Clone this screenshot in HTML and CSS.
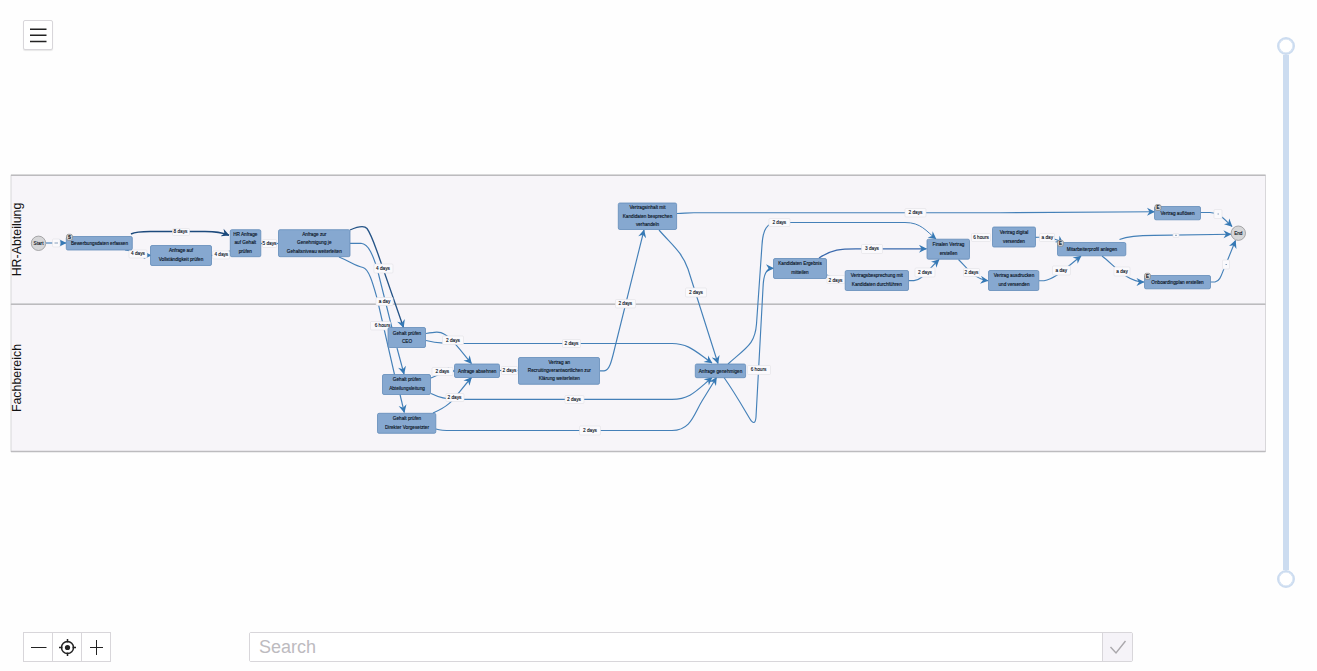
FILE: index.html
```html
<!DOCTYPE html>
<html lang="de">
<head>
    <meta charset="UTF-8">
    <meta name="viewport" content="width=device-width, initial-scale=1.0">
    <title>Prozess</title>
    <link rel="stylesheet" href="styles.css">
</head>
<body>
    <div class="app">
        <div class="main">
            <header class="header">
                <button class="button menu-button" aria-label="Menu">
                    <svg width="28" height="28" viewBox="0 0 28 28">
                        <path class="icon-line" d="M6 8.200h16.500M6 14.300h16.500M6 20.500h16.500"/>
                    </svg>
                </button>
            </header>

            <svg class="diagram" width="1267" height="285" viewBox="0 170 1267 285">
                <defs>
                    <marker id="arrow" viewBox="0 0 8 8" refX="7.5" refY="4" markerWidth="8.5" markerHeight="8.5" markerUnits="userSpaceOnUse" orient="auto">
                        <path d="M0.4 0.2L8 4L0.4 7.8L2.8 4Z" fill="#3679b5"/>
                    </marker>
                    <marker id="arrow-dark" viewBox="0 0 8 8" refX="7.5" refY="4" markerWidth="8.5" markerHeight="8.5" markerUnits="userSpaceOnUse" orient="auto">
                        <path d="M0.4 0.2L8 4L0.4 7.8L2.8 4Z" fill="#1d4a7c"/>
                    </marker>
                </defs>

                <!-- lanes -->
                <rect class="lane" x="11" y="175.3" width="1254.5" height="129"/>
                <rect class="lane" x="11" y="304.3" width="1254.5" height="147.2"/>
                <path class="lane-line" d="M11 175.3H1265.5M11 304.3H1265.5M11 451.5H1265.5"/>
                <text class="lane-title" transform="translate(21 239.5) rotate(-90)">HR-Abteilung</text>
                <text class="lane-title" transform="translate(21 378) rotate(-90)">Fachbereich</text>

                <!-- edges -->
                <g class="edges">
                    <path d="M46 243H66"/>
                    <path class="strong" d="M131 234C137 231 145 231.5 155 231.5H205C216 231.5 221 232 229 235.3"/>
                    <path d="M125 250C136 251 141 255 151 255.5"/>
                    <path class="plain" d="M211 255.5C218 255 224 253 230 251"/>
                    <path class="plain" d="M261 243.5H278"/>
                    <path class="dark" d="M350 230C358 226.500 364 225 367 228.500C371 234 374 243 378 254L403.500 327.500"/>
                    <path class="plain" d="M350 243.300H361C369 244 373 256 377 268L392 328"/>
                    <path d="M397 348L404 374"/>
                    <path class="plain" d="M339 257C349 261 355 266 363 267.500C369 269 373 284 377 298L394.500 374.500"/>
                    <path d="M400 394.500L404.300 412.500"/>
                    <path d="M426 333.500C434 332 440 331 444 334C452 338 460 350 471.500 363.500"/>
                    <path d="M426 340.500C438 343.500 448 343.500 465 343.500H672C689 343.500 696 352 712 363"/>
                    <path d="M431 378C439 374 447 371 455 371"/>
                    <path d="M431 393.500C440 398 446 399.300 456 399.300H672C690 399.300 696 391 712 377.500"/>
                    <path d="M433 413C454 404 454 397 471.500 377.500"/>
                    <path d="M436 429C443 431 450 430.500 456 430.500H672C691 430.500 694 414 702 401L716.500 377.500"/>
                    <path class="plain" d="M500 370.500H518"/>
                    <path d="M600 370.800H604C610 371 612 359 616 343L644 230"/>
                    <path d="M677 213.500C684 213.500 686 212.700 694 212.700H1000L1154.500 211.700"/>
                    <path d="M659 230C672 245 682 252 688 269L718 363.500"/>
                    <path class="plain" d="M728 364C747 347 755 344 756.500 324L762 245C763 229 767 222.500 778 222.500"/>
                    <path class="thin-edge" d="M778 222.500H905C921 222.500 926 231 936 239"/>
                    <path d="M724 377.500C735 393 744 409 750 419C753 424 755.500 424 756 417L763 288C763.500 274 766 268.300 773.500 268.300"/>
                    <path class="strong-blue" d="M819 258C832 249.500 841 248.800 856 248.800H926.500"/>
                    <path class="plain" d="M827 275C833 278 838 280 845 280"/>
                    <path d="M908.500 280.600H914C922 280 927 271 939 259.500"/>
                    <path d="M958.500 259.500C967 268 974 279 988 280.700"/>
                    <path d="M1035 237.300C1046 237.300 1054 236.500 1063 243.500"/>
                    <path d="M1039 280.700H1044C1055 279 1066 268 1081 256"/>
                    <path d="M1119.500 239.500C1130 235.500 1143 235.400 1154 235.400L1231 234.200"/>
                    <path d="M1102 256C1115 266 1127 282 1144 282"/>
                    <path d="M1200.500 212.500H1210C1219 212.500 1223 218 1232 226.500"/>
                    <path d="M1210.500 282H1215C1221 281 1222 272 1226 264L1235.500 240.500"/>
                </g>

                <!-- edge labels -->
                <g class="edge-label">
                    <rect x="52.500" y="239" width="7.500" height="8"/><path class="dash" d="M54.500 243h3.500"/>
                    <rect x="172.500" y="228.500" width="17" height="7"/><text x="180.500" y="233.300">8 days</text>
                    <rect x="129" y="250" width="18" height="8"/><text x="138" y="255.300">4 days</text>
                    <rect x="212.500" y="251" width="17" height="8"/><text x="221.300" y="256">4 days</text>
                    <rect x="262.500" y="239.500" width="14" height="8"/><text x="269.500" y="245">5 days</text>
                    <rect x="374" y="264" width="19" height="9"/><text x="383" y="270.300">4 days</text>
                    <rect x="376" y="297.500" width="17" height="8"/><text x="384.500" y="303">a day</text>
                    <rect x="370.500" y="321.500" width="20" height="8.500"/><text x="382.500" y="327.300">6 hours</text>
                    <rect x="442.500" y="336" width="21" height="8.500"/><text x="453" y="342.300">2 days</text>
                    <rect x="562.500" y="339.500" width="18" height="8"/><text x="571.500" y="345">2 days</text>
                    <rect x="432" y="367.500" width="21" height="8"/><text x="442.300" y="373">2 days</text>
                    <rect x="446" y="393.500" width="18" height="8"/><text x="454.500" y="399">2 days</text>
                    <rect x="501.500" y="366.500" width="16" height="8"/><text x="509.500" y="372.300">2 days</text>
                    <rect x="565" y="395.500" width="19" height="8"/><text x="574" y="401">2 days</text>
                    <rect x="579.500" y="426" width="21" height="9"/><text x="590" y="432.300">2 days</text>
                    <rect x="615.500" y="299.500" width="20" height="8.500"/><text x="625.300" y="305.300">2 days</text>
                    <rect x="685.500" y="288" width="21" height="9"/><text x="696" y="294.300">2 days</text>
                    <rect x="747.500" y="365.500" width="23" height="9"/><text x="758.500" y="371.300">6 hours</text>
                    <rect x="905" y="208.500" width="21" height="8.500"/><text x="915.500" y="214">2 days</text>
                    <rect x="769" y="218.500" width="21" height="8"/><text x="779.300" y="224">2 days</text>
                    <rect x="861.500" y="244.500" width="21" height="9"/><text x="872" y="250.300">3 days</text>
                    <rect x="827" y="275.500" width="18" height="8"/><text x="835.500" y="281.500">2 days</text>
                    <rect x="915" y="268" width="20" height="9"/><text x="925" y="274.300">2 days</text>
                    <rect x="971.500" y="233.500" width="19" height="8"/><text x="981" y="239.200">6 hours</text>
                    <rect x="963.500" y="268.500" width="16" height="8"/><text x="971.500" y="274.300">2 days</text>
                    <rect x="1039.500" y="233.500" width="15" height="8"/><text x="1047.300" y="239">a day</text>
                    <rect x="1052.500" y="266" width="18" height="9"/><text x="1061.300" y="272.300">a day</text>
                    <rect x="1114" y="267" width="16" height="9"/><text x="1122" y="273">a day</text>
                    <rect x="1173" y="233.500" width="6" height="4"/><path class="dash" d="M1175 235.300h2"/>
                    <rect x="1214" y="209.500" width="8" height="9"/><path class="dash" d="M1217.500 214h1.500"/>
                    <rect x="1222.500" y="260" width="7" height="9"/><path class="dash" d="M1225.500 264.500h1.500"/>
                </g>

                <!-- start / end -->
                <g class="terminal">
                    <circle cx="38.500" cy="243.300" r="7.200"/><text x="38.500" y="245">Start</text>
                    <circle cx="1238.300" cy="233.200" r="7.200"/><text x="1238.300" y="235">End</text>
                </g>

                <!-- activities -->
                <g class="node">
                    <rect x="66.300" y="236.500" width="66" height="13.500" rx="1.500"/><text x="99.500" y="245">Bewerbungsdaten erfassen</text>
                    <rect x="150.500" y="245.500" width="61" height="20" rx="1.500"/><text x="181" y="252">Anfrage auf</text><text x="181" y="261">Vollständigkeit prüfen</text>
                    <rect x="230.300" y="229.700" width="30.500" height="27" rx="1.500"/><text x="245.300" y="236">HR Anfrage</text><text x="245.300" y="244.300">auf Gehalt</text><text x="245.300" y="253">prüfen</text>
                    <rect x="278.500" y="229.700" width="71.500" height="27" rx="1.500"/><text x="314.300" y="236">Anfrage zur</text><text x="314.300" y="244.300">Genehmigung je</text><text x="314.300" y="253">Gehaltsniveau weiterleiten</text>
                    <rect x="388" y="327.500" width="37.500" height="20" rx="1.500"/><text x="407" y="335.200">Gehalt prüfen</text><text x="407" y="343.300">CEO</text>
                    <rect x="382.500" y="374.500" width="48" height="20" rx="1.500"/><text x="407" y="381.200">Gehalt prüfen</text><text x="407" y="390">Abteilungsleitung</text>
                    <rect x="377.500" y="413.300" width="58.300" height="20" rx="1.500"/><text x="407" y="420.200">Gehalt prüfen</text><text x="407" y="429.200">Direkter Vorgesetzter</text>
                    <rect x="454.500" y="364" width="45" height="13.500" rx="1.500"/><text x="477.200" y="373">Anfrage absehnen</text>
                    <rect x="518.500" y="357.500" width="81" height="26.800" rx="1.500"/><text x="559.300" y="364.300">Vertrag an</text><text x="559.300" y="372.300">Recruitingverantwortlichen zur</text><text x="559.300" y="380.300">Klärung weiterleiten</text>
                    <rect x="618.300" y="203" width="58.300" height="26.500" rx="1.500"/><text x="647.500" y="209.300">Vertragsinhalt mit</text><text x="647.500" y="218">Kandidaten besprechen</text><text x="647.500" y="226.300">verhandeln</text>
                    <rect x="695.300" y="364" width="50.300" height="13.700" rx="1.500"/><text x="720.500" y="373">Anfrage genehmigen</text>
                    <rect x="773.500" y="258.500" width="53" height="20" rx="1.500"/><text x="800" y="265">Kandidaten Ergebnis</text><text x="800" y="274">mitteilen</text>
                    <rect x="845.200" y="270.500" width="63.300" height="20" rx="1.500"/><text x="876.800" y="277">Vertragsbesprechung mit</text><text x="876.800" y="286">Kandidaten durchführen</text>
                    <rect x="927" y="239.200" width="42.500" height="20" rx="1.500"/><text x="948.500" y="246">Finalen Vertrag</text><text x="948.500" y="255">erstellen</text>
                    <rect x="992.500" y="227" width="43" height="20" rx="1.500"/><text x="1014" y="234">Vertrag digital</text><text x="1014" y="243">versenden</text>
                    <rect x="988.500" y="270.500" width="50.300" height="20" rx="1.500"/><text x="1014" y="277">Vertrag ausdrucken</text><text x="1014" y="286">und versenden</text>
                    <rect x="1057.500" y="242.500" width="68.300" height="13.300" rx="1.500"/><text x="1092" y="251">Mitarbeiterprofil anlegen</text>
                    <rect x="1154.500" y="206.500" width="46" height="13.300" rx="1.500"/><text x="1177.500" y="215">Vertrag auflösen</text>
                    <rect x="1144.500" y="275.500" width="66" height="13.300" rx="1.500"/><text x="1177.500" y="284">Onboardingplan erstellen</text>
                </g>

                <!-- badges on the activities -->
                <g class="badge">
                    <rect x="66.500" y="234.300" width="6" height="6" rx="2"/><text x="69.500" y="238.900">S</text>
                    <rect x="1057.500" y="240.300" width="6" height="6" rx="2"/><text x="1060.500" y="244.900">E</text>
                    <rect x="1155" y="204.500" width="6" height="6" rx="2"/><text x="1158" y="209.100">E</text>
                    <rect x="1144.500" y="273.300" width="6" height="6" rx="2"/><text x="1147.500" y="277.900">E</text>
                </g>
            </svg>

            <footer class="footer">
                <div class="zoom-controls">
                    <button class="button" aria-label="Zoom out">
                        <svg width="28" height="28" viewBox="0 0 28 28"><path class="icon-line thin" d="M7 14.500h15.500"/></svg>
                    </button>
                    <button class="button" aria-label="Center">
                        <svg width="28" height="28" viewBox="0 0 28 28">
                            <circle class="icon-line" cx="14.500" cy="14.500" r="6"/>
                            <circle cx="14.500" cy="14.500" r="2.600" fill="#222"/>
                            <path class="icon-line" d="M14.500 6v3.500M14.500 19.500v3.500M6 14.500h3.500M19.500 14.500h3.500"/>
                        </svg>
                    </button>
                    <button class="button" aria-label="Zoom in">
                        <svg width="28" height="28" viewBox="0 0 28 28"><path class="icon-line thin" d="M8 14.500h13M14.500 7v15"/></svg>
                    </button>
                </div>
                <form class="search">
                    <input type="text" class="search-input" placeholder="Search">
                    <button type="button" class="search-button" aria-label="Apply">
                        <svg width="28" height="28" viewBox="0 0 28 28"><path d="M6.500 14L12 20L21.500 8" fill="none" stroke="#aaa8ac" stroke-width="1.400"/></svg>
                    </button>
                </form>
            </footer>
        </div>

        <aside class="slider">
            <span class="handle"></span>
            <span class="track"></span>
            <span class="handle"></span>
        </aside>
    </div>
</body>
</html>
```
FILE: styles.css
```css
* {
    margin: 0;
    padding: 0;
    box-sizing: border-box;
}
body {
    font-family: 'Liberation Sans', Arial, sans-serif;
    background: #fefefe;
    color: #111;
    overflow: hidden;
}
.app {
    display: flex;
    height: 671px;
}
.main {
    width: 1267px;
    display: flex;
    flex-direction: column;
}
.header {
    height: 170px;
    padding: 20px 23px;
}
.button {
    width: 30px;
    height: 30px;
    background: #fff;
    border: 1px solid #d8d6da;
    display: flex;
    align-items: center;
    justify-content: center;
    cursor: pointer;
}
.menu-button {
    border-radius: 2px;
    box-shadow: 0 1px 1px #e8e8e8;
}
.button svg,
.search-button svg {
    flex-shrink: 0;
}
.icon-line {
    fill: none;
    stroke: #222;
    stroke-width: 1.5;
}
.thin {
    stroke-width: 1;
}

/* diagram */
.diagram {
    display: block;
}
.diagram text {
    font-size: 4.7px;
    text-anchor: middle;
    fill: #08111c;
    stroke: #08111c;
    stroke-width: 0.12;
}
.lane {
    fill: #f7f5f9;
    stroke: #d8d7da;
    stroke-width: 1;
}
.lane-line {
    stroke: #bcbbbe;
    stroke-width: 1.4;
}
.diagram .lane-title {
    font-size: 12.4px;
    fill: #111;
    stroke: none;
}
.edges path {
    fill: none;
    stroke: #4480b8;
    stroke-width: 1.15;
    marker-end: url(#arrow);
}
.edges .thin-edge {
    stroke-width: 1;
}
.edges .plain {
    marker-end: none;
}
.edges .dark {
    stroke: #255487;
    stroke-width: 1.3;
}
.edges .strong {
    stroke: #1d4a7c;
    stroke-width: 1.5;
    marker-end: url(#arrow-dark);
}
.edges .strong-blue {
    stroke: #3a69ad;
    stroke-width: 1.3;
}
.edge-label rect {
    fill: #faf9fc;
    stroke: #e2e0e6;
    stroke-width: 0.6;
    rx: 1px;
}
.edge-label .dash {
    stroke: #6d8cab;
    stroke-width: 0.8;
}
.node rect {
    fill: #86a8d0;
    stroke: #628bb9;
    stroke-width: 0.8;
}
.terminal circle {
    fill: #d6d6d8;
    stroke: #969698;
    stroke-width: 0.8;
}
.badge rect {
    fill: #d3d3d3;
    stroke: #858585;
    stroke-width: 0.7;
}
.diagram .badge text {
    font-size: 4.5px;
    font-weight: bold;
}

/* bottom bar */
.footer {
    margin-top: auto;
    padding: 0 0 9px 23px;
    display: flex;
    justify-content: space-between;
    width: 1133px;
}
.zoom-controls {
    display: flex;
}
.zoom-controls .button + .button {
    border-left: none;
    width: 29px;
}
.search {
    display: flex;
    width: 884px;
    height: 30px;
    border: 1px solid #d8d6da;
    border-radius: 2px;
}
.search-input {
    flex: 1;
    padding: 0 10px 0 9px;
    border: none;
    outline: none;
    background: #fff;
    font-family: inherit;
    font-size: 18px;
}
.search-input::placeholder {
    color: #bdbbbf;
}
.search-button {
    width: 30px;
    border: none;
    border-left: 1px solid #d8d6da;
    background: #f5f3f8;
    display: flex;
    align-items: center;
    justify-content: center;
}

/* slider */
.slider {
    width: 38px;
    height: 551px;
    margin-top: 37px;
    display: flex;
    flex-direction: column;
    align-items: center;
}
.handle {
    width: 18px;
    height: 18px;
    border: 2px solid #ccdcf0;
    box-shadow: inset 0 0 0 0.5px #ccdcf0;
    border-radius: 50%;
    background: #fff;
}
.track {
    flex: 1;
    width: 6px;
    background: #ccdcf0;
}
```
